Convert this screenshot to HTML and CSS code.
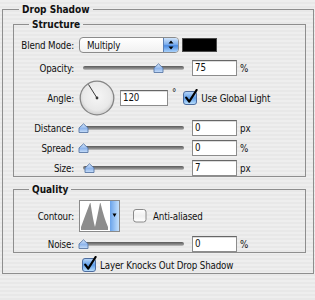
FILE: index.html
```html
<!DOCTYPE html>
<html>
<head>
<meta charset="utf-8">
<title>Drop Shadow</title>
<link rel="stylesheet" href="styles.css">
</head>
<body>
<fieldset class="box outer">
  <legend class="title outer-title">Drop Shadow</legend>
  <fieldset class="box sub structure">
    <legend class="title">Structure</legend>

    <div class="row r-blend">
      <span class="lbl">Blend Mode:</span>
      <div class="popup">
        <span class="popup-text">Multiply</span>
        <span class="popup-btn">
          <svg width="14" height="14" viewBox="0 0 14 14"><path d="M4.5 5.5 L7 2.5 L9.5 5.5 Z M4.5 8.5 L7 11.5 L9.5 8.5 Z" fill="#000"/></svg>
        </span>
      </div>
      <div class="swatch"></div>
    </div>

    <div class="row r-opacity">
      <span class="lbl">Opacity:</span>
      <div class="slider">
        <div class="track"></div>
        <svg class="thumb" style="--v:0.75" width="11" height="10" viewBox="0 0 11 10"><defs><linearGradient id="tg1" x1="0" y1="0" x2="0" y2="1"><stop offset="0" stop-color="#d6e6fb"/><stop offset="0.55" stop-color="#8fb6ec"/><stop offset="1" stop-color="#c9def8"/></linearGradient></defs><path d="M1 9.5 L1 5 L5.5 0.8 L10 5 L10 9.5 Z" fill="url(#tg1)" stroke="#5a78a6" stroke-width="0.9"/></svg>
      </div>
      <div class="field">75</div><span class="unit">%</span>
    </div>

    <div class="row r-angle">
      <span class="lbl">Angle:</span>
      <svg class="dial" width="36" height="36" viewBox="0 0 36 36"><defs><radialGradient id="dg" cx="0.5" cy="0.45" r="0.55"><stop offset="0" stop-color="#f6f6f6"/><stop offset="0.75" stop-color="#e9e9e9"/><stop offset="1" stop-color="#cdcdcd"/></radialGradient></defs><circle cx="18" cy="18" r="16.8" fill="url(#dg)" stroke="#858585" stroke-width="1.3"/><line x1="18" y1="18" x2="9.5" y2="4.5" stroke="#3a3a3a" stroke-width="1"/><circle cx="18" cy="18" r="1.4" fill="#3a3a3a"/></svg>
      <div class="field f-angle">120</div>
      <span class="deg">°</span>
      <svg class="cb" width="16" height="16" viewBox="0 0 16 16"><defs><linearGradient id="cbg1" x1="0" y1="0" x2="0" y2="1"><stop offset="0" stop-color="#bcd9fa"/><stop offset="0.5" stop-color="#5f9ee9"/><stop offset="1" stop-color="#bfe2fd"/></linearGradient></defs><rect x="0.5" y="2.5" width="13" height="13" rx="2.5" fill="url(#cbg1)" stroke="#4d6c9e"/><path d="M3.2 8.6 L6.2 12.6 L13.6 1" fill="none" stroke="#000" stroke-width="2.2" stroke-linecap="round" stroke-linejoin="round"/></svg>
      <span class="cb-text">Use Global Light</span>
    </div>

    <div class="row r-dist">
      <span class="lbl">Distance:</span>
      <div class="slider">
        <div class="track"></div>
        <svg class="thumb" style="--v:0" width="11" height="10" viewBox="0 0 11 10"><defs><linearGradient id="tg2" x1="0" y1="0" x2="0" y2="1"><stop offset="0" stop-color="#d6e6fb"/><stop offset="0.55" stop-color="#8fb6ec"/><stop offset="1" stop-color="#c9def8"/></linearGradient></defs><path d="M1 9.5 L1 5 L5.5 0.8 L10 5 L10 9.5 Z" fill="url(#tg2)" stroke="#5a78a6" stroke-width="0.9"/></svg>
      </div>
      <div class="field">0</div><span class="unit">px</span>
    </div>

    <div class="row r-spread">
      <span class="lbl">Spread:</span>
      <div class="slider">
        <div class="track"></div>
        <svg class="thumb" style="--v:0" width="11" height="10" viewBox="0 0 11 10"><defs><linearGradient id="tg3" x1="0" y1="0" x2="0" y2="1"><stop offset="0" stop-color="#d6e6fb"/><stop offset="0.55" stop-color="#8fb6ec"/><stop offset="1" stop-color="#c9def8"/></linearGradient></defs><path d="M1 9.5 L1 5 L5.5 0.8 L10 5 L10 9.5 Z" fill="url(#tg3)" stroke="#5a78a6" stroke-width="0.9"/></svg>
      </div>
      <div class="field">0</div><span class="unit">%</span>
    </div>

    <div class="row r-size">
      <span class="lbl">Size:</span>
      <div class="slider">
        <div class="track"></div>
        <svg class="thumb" style="--v:0.06" width="11" height="10" viewBox="0 0 11 10"><defs><linearGradient id="tg4" x1="0" y1="0" x2="0" y2="1"><stop offset="0" stop-color="#d6e6fb"/><stop offset="0.55" stop-color="#8fb6ec"/><stop offset="1" stop-color="#c9def8"/></linearGradient></defs><path d="M1 9.5 L1 5 L5.5 0.8 L10 5 L10 9.5 Z" fill="url(#tg4)" stroke="#5a78a6" stroke-width="0.9"/></svg>
      </div>
      <div class="field">7</div><span class="unit">px</span>
    </div>
  </fieldset>

  <fieldset class="box sub quality">
    <legend class="title">Quality</legend>

    <div class="row r-contour">
      <span class="lbl">Contour:</span>
      <svg class="contour" width="41" height="32" viewBox="0 0 41 32"><defs><linearGradient id="ctg" x1="0" y1="0" x2="1" y2="0"><stop offset="0" stop-color="#6aa3ea"/><stop offset="1" stop-color="#c4e0fc"/></linearGradient></defs><rect x="0.5" y="0.5" width="40" height="31" fill="#fff" stroke="#8a8a8a"/><path d="M2 30 L2 27 Q6 16 11 3 L11.5 3 Q14 20 16 27 Q18 18 21 3 L21.5 3 Q25 18 29 27 L29 30 Z" fill="#8d8d8d"/><rect x="31" y="1" width="9" height="30" fill="url(#ctg)"/><path d="M33.5 13.5 L37.5 13.5 L35.5 17 Z" fill="#000"/></svg>
      <svg class="cb cb-off" width="14" height="14" viewBox="0 0 14 14"><defs><linearGradient id="cbo" x1="0" y1="0" x2="0" y2="1"><stop offset="0" stop-color="#ffffff"/><stop offset="0.5" stop-color="#f0f0f0"/><stop offset="1" stop-color="#ffffff"/></linearGradient></defs><rect x="0.5" y="0.5" width="12.5" height="12.5" rx="2.5" fill="url(#cbo)" stroke="#8a8a8a"/></svg>
      <span class="cb-text">Anti-aliased</span>
    </div>

    <div class="row r-noise">
      <span class="lbl">Noise:</span>
      <div class="slider">
        <div class="track"></div>
        <svg class="thumb" style="--v:0" width="11" height="10" viewBox="0 0 11 10"><defs><linearGradient id="tg5" x1="0" y1="0" x2="0" y2="1"><stop offset="0" stop-color="#d6e6fb"/><stop offset="0.55" stop-color="#8fb6ec"/><stop offset="1" stop-color="#c9def8"/></linearGradient></defs><path d="M1 9.5 L1 5 L5.5 0.8 L10 5 L10 9.5 Z" fill="url(#tg5)" stroke="#5a78a6" stroke-width="0.9"/></svg>
      </div>
      <div class="field">0</div><span class="unit">%</span>
    </div>
  </fieldset>

  <div class="row r-knock">
    <svg class="cb" width="16" height="16" viewBox="0 0 16 16"><defs><linearGradient id="cbg2" x1="0" y1="0" x2="0" y2="1"><stop offset="0" stop-color="#bcd9fa"/><stop offset="0.5" stop-color="#5f9ee9"/><stop offset="1" stop-color="#bfe2fd"/></linearGradient></defs><rect x="0.5" y="2.5" width="13" height="13" rx="2.5" fill="url(#cbg2)" stroke="#4d6c9e"/><path d="M3.2 8.6 L6.2 12.6 L13.6 1" fill="none" stroke="#000" stroke-width="2.2" stroke-linecap="round" stroke-linejoin="round"/></svg>
    <span class="cb-text">Layer Knocks Out Drop Shadow</span>
  </div>
</fieldset>
</body>
</html>
```
FILE: styles.css
```css
* { box-sizing: border-box; }
html, body { margin: 0; padding: 0; }
body {
  width: 315px;
  height: 300px;
  overflow: hidden;
  padding-top: 3px;
  font-family: "DejaVu Sans Condensed", "DejaVu Sans", sans-serif;
  font-size: 9.7px;
  letter-spacing: -0.15px;
  color: #111;
  background: repeating-linear-gradient(to bottom, #eeeeee 0, #eeeeee 2px, #e8e8e8 2px, #e8e8e8 4px);
}

fieldset.box {
  border: 1px solid #8e8e8e;
  padding: 0;
  min-width: 0;
}
.outer { margin: 0 1px 0 2px; padding-bottom: 20px; }
.sub { margin: 0 7px 0 10px; padding-bottom: 8px; }
.structure { margin-top: 2px; }
.quality { margin-top: 6px; }

.title {
  padding: 0 3px;
  margin-left: 15px;
  font-size: 10px;
  font-weight: bold;
  letter-spacing: 0;
  line-height: 13px;
}
.outer-title { margin-left: 16px; }

.row {
  display: flex;
  align-items: center;
  height: 16px;
  margin-top: 4px;
}
.lbl {
  width: 60px;
  text-align: right;
  flex: none;
}
.r-blend { margin-top: 6px; }
.r-opacity { margin-top: 7px; }
.r-angle { height: 36px; }
.r-contour { height: 32px; }
.r-knock { margin-left: 79px; }

/* popup */
.popup {
  margin-left: 5px;
  width: 100px;
  height: 16px;
  border: 1px solid #8b8b8b;
  border-radius: 4px;
  background: linear-gradient(#ffffff, #f1f1f1);
  display: flex;
  align-items: center;
  overflow: hidden;
}
.popup-text { flex: 1; padding-left: 7px; }
.popup-btn {
  width: 15px;
  height: 100%;
  display: flex;
  align-items: center;
  justify-content: center;
  border-left: 1px solid #5c7fb3;
  background: linear-gradient(#cfe3fa, #7fb0ee 45%, #4a8be3 55%, #a9d2fb);
}
.swatch {
  margin-left: 3px;
  width: 35px;
  height: 14px;
  background: #000;
  border: 1px solid #4a4a4a;
}

/* slider */
.slider {
  margin-left: 5px;
  width: 108px;
  height: 10px;
  position: relative;
  flex: none;
}
.track {
  margin: 3px 3px 0 4px;
  height: 4px;
  border-radius: 2px;
  background: linear-gradient(#5a5a5a, #8a8a8a 60%, #c4c4c4);
}
.thumb {
  position: absolute;
  top: 0;
  left: calc(4px + var(--v) * 101px - 5.5px);
}

/* text field */
.field {
  margin-left: 5px;
  width: 45px;
  height: 16px;
  flex: none;
  background: #fff;
  border: 1px solid #8c8c8c;
  border-top-color: #666;
  box-shadow: inset 0 1px 0 #dcdcdc;
  padding-left: 2px;
  line-height: 14px;
}
.unit { margin-left: 3px; }

/* angle */
.dial { margin-left: 5px; flex: none; }
.f-angle { width: 48px; }
.deg { margin-left: 4px; align-self: flex-start; margin-top: 7px; }
.r-angle .cb { margin-left: 7px; margin-top: -3px; }
.cb { flex: none; }
.cb-text { margin-left: 2px; }

/* contour */
.contour { margin-left: 5px; flex: none; }
.cb-off { margin-left: 13px; }
.cb-off + .cb-text { margin-left: 6px; }
.r-knock .cb { margin-top: -3px; }
```
